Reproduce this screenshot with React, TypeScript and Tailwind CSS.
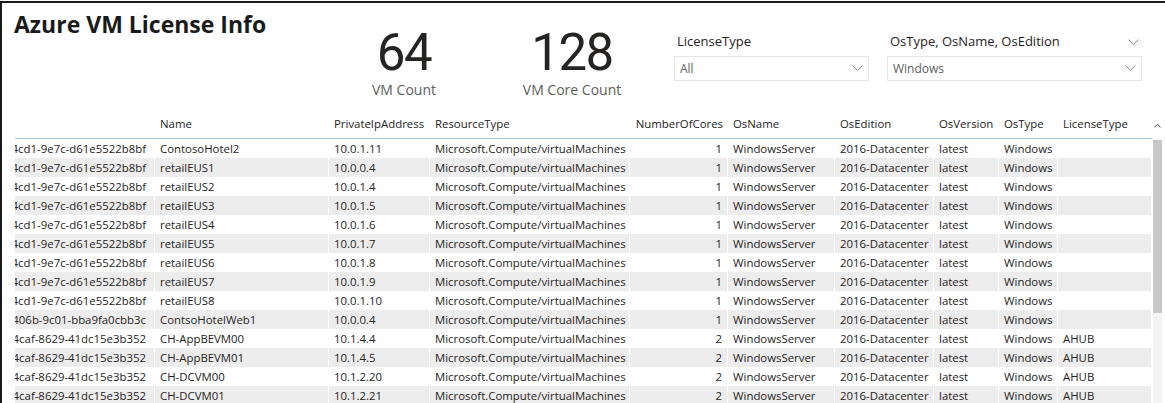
const font = { fontFamily: '"Open Sans", "Noto Sans", sans-serif' }

const cols = [
  { key: 'id', label: '', w: 'w-[140px]' },
  { key: 'name', label: 'Name', w: 'w-[174px]' },
  { key: 'ip', label: 'PrivateIpAddress', w: 'w-[101px]' },
  { key: 'rt', label: 'ResourceType', w: 'w-[200px]' },
  { key: 'cores', label: 'NumberOfCores', w: 'w-[98px]' },
  { key: 'os', label: 'OsName', w: 'w-[107px]' },
  { key: 'ed', label: 'OsEdition', w: 'w-[99px]' },
  { key: 'ver', label: 'OsVersion', w: 'w-[65px]' },
  { key: 'type', label: 'OsType', w: 'w-[59px]' },
  { key: 'lic', label: 'LicenseType', w: 'w-[94px]' },
]

const idA = '6b1f0a2c-3e5a-4cd1-9e7c-d61e5522b8bf'
const idB = 'c9e3b7d2-5f1a-406b-9c01-bba9fa0cbb3c'
const idC = '8f2d4e1a-7b3c-4caf-8629-41dc15e3b352'

const rows = [
  [idA, 'ContosoHotel2', '10.0.1.11', 1, ''],
  [idA, 'retailEUS1', '10.0.0.4', 1, ''],
  [idA, 'retailEUS2', '10.0.1.4', 1, ''],
  [idA, 'retailEUS3', '10.0.1.5', 1, ''],
  [idA, 'retailEUS4', '10.0.1.6', 1, ''],
  [idA, 'retailEUS5', '10.0.1.7', 1, ''],
  [idA, 'retailEUS6', '10.0.1.8', 1, ''],
  [idA, 'retailEUS7', '10.0.1.9', 1, ''],
  [idA, 'retailEUS8', '10.0.1.10', 1, ''],
  [idB, 'ContsoHotelWeb1', '10.0.0.4', 1, ''],
  [idC, 'CH-AppBEVM00', '10.1.4.4', 2, 'AHUB'],
  [idC, 'CH-AppBEVM01', '10.1.4.5', 2, 'AHUB'],
  [idC, 'CH-DCVM00', '10.1.2.20', 2, 'AHUB'],
  [idC, 'CH-DCVM01', '10.1.2.21', 2, 'AHUB'],
] as const

function Chevron() {
  return (
    <svg width="11" height="7" viewBox="0 0 11 7" className="shrink-0">
      <polyline points="0.5,0.5 5.5,5.5 10.5,0.5" fill="none" stroke="#8a8886" strokeWidth="1" />
    </svg>
  )
}

function Slicer({ title, value, width, headerChevron }: { title: string; value: string; width: string; headerChevron?: boolean }) {
  return (
    <div className={`${width} shrink-0 pt-[28px]`}>
      <div className="flex items-center justify-between h-[22px] pl-[3px] pr-[3px]">
        <span className="text-[13px] text-[#252423]">{title}</span>
        {headerChevron && <Chevron />}
      </div>
      <div className="mt-[3px] h-[25px] border border-[#e6e6e6] flex items-center justify-between pl-[5px] pr-[5px]">
        <span className="text-[12px] text-[#605e5c]">{value}</span>
        <Chevron />
      </div>
    </div>
  )
}

function Card({ value, label }: { value: string; label: string }) {
  return (
    <div className="w-[168px] shrink-0 flex flex-col items-center pt-[24px]">
      <div className="text-[51px] leading-none text-[#252423] tracking-[-1.5px]" style={{ fontFamily: 'Roboto, sans-serif' }}>
        {value}
      </div>
      <div className="mt-[1px] text-[14px] text-[#605e5c]">{label}</div>
    </div>
  )
}

export default function App() {
  return (
    <div className="w-[1165px] h-[403px] overflow-hidden bg-white">
      <div className="mt-[1px] h-[402px] border-t-2 border-l-2 border-[#1a1a1a] flex flex-col" style={font}>
        {/* Header area */}
        <div className="h-[109px] flex shrink-0">
          <div className="w-[318px] shrink-0 pl-[12px] pt-[7px]">
            <h1 className="text-[23px] font-bold text-[#1a1a1a] leading-tight">Azure VM License Info</h1>
          </div>
          <Card value="64" label="VM Count" />
          <Card value="128" label="VM Core Count" />
          <div className="ml-[18px]">
            <Slicer title="LicenseType" value="All" width="w-[195px]" />
          </div>
          <div className="ml-[18px]">
            <Slicer title="OsType, OsName, OsEdition" value="Windows" width="w-[255px]" headerChevron />
          </div>
        </div>

        {/* Table */}
        <div className="flex flex-1 min-h-0">
          <div className="ml-[13px] w-[1137px] shrink-0 text-[11.4px] text-[#252423]">
            <div className="flex h-[27px] border-b border-[#a3c6e3]">
              {cols.map((c) => (
                <div
                  key={c.key}
                  className={`${c.w} shrink-0 pl-[5px] pr-[5px] pt-[3px] whitespace-nowrap overflow-hidden ${c.key === 'cores' ? 'text-right' : ''}`}
                >
                  {c.label}
                </div>
              ))}
            </div>
            {rows.map((r, i) => {
              const cells = [r[0], r[1], r[2], 'Microsoft.Compute/virtualMachines', String(r[3]), 'WindowsServer', '2016-Datacenter', 'latest', 'Windows', r[4]]
              return (
                <div key={i} className={`flex h-[19px] items-center ${i % 2 === 1 ? 'bg-[#eeeded]' : 'bg-white'}`}>
                  {cells.map((v, j) => (
                    <div
                      key={j}
                      className={`${cols[j].w} shrink-0 h-full flex items-center border-r border-white whitespace-nowrap overflow-hidden ${
                        j === 0 ? 'justify-end pr-[8px]' : j === 4 ? 'justify-end pr-[5px]' : 'pl-[5px]'
                      }`}
                    >
                      <span className="shrink-0">{v}</span>
                    </div>
                  ))}
                </div>
              )
            })}
          </div>
          {/* Scrollbar */}
          <div className="ml-[1px] w-[9px] shrink-0 bg-[#f3f3f3] flex flex-col items-center">
            <div className="h-[27px] w-full bg-white flex items-center justify-center">
              <svg width="7" height="5" viewBox="0 0 7 5">
                <polyline points="0.5,4.5 3.5,1 6.5,4.5" fill="none" stroke="#605e5c" strokeWidth="1" />
              </svg>
            </div>
            <div className="mt-[1px] w-[9px] h-[173px] bg-[#c8c8c8]" />
          </div>
        </div>
      </div>
    </div>
  )
}
